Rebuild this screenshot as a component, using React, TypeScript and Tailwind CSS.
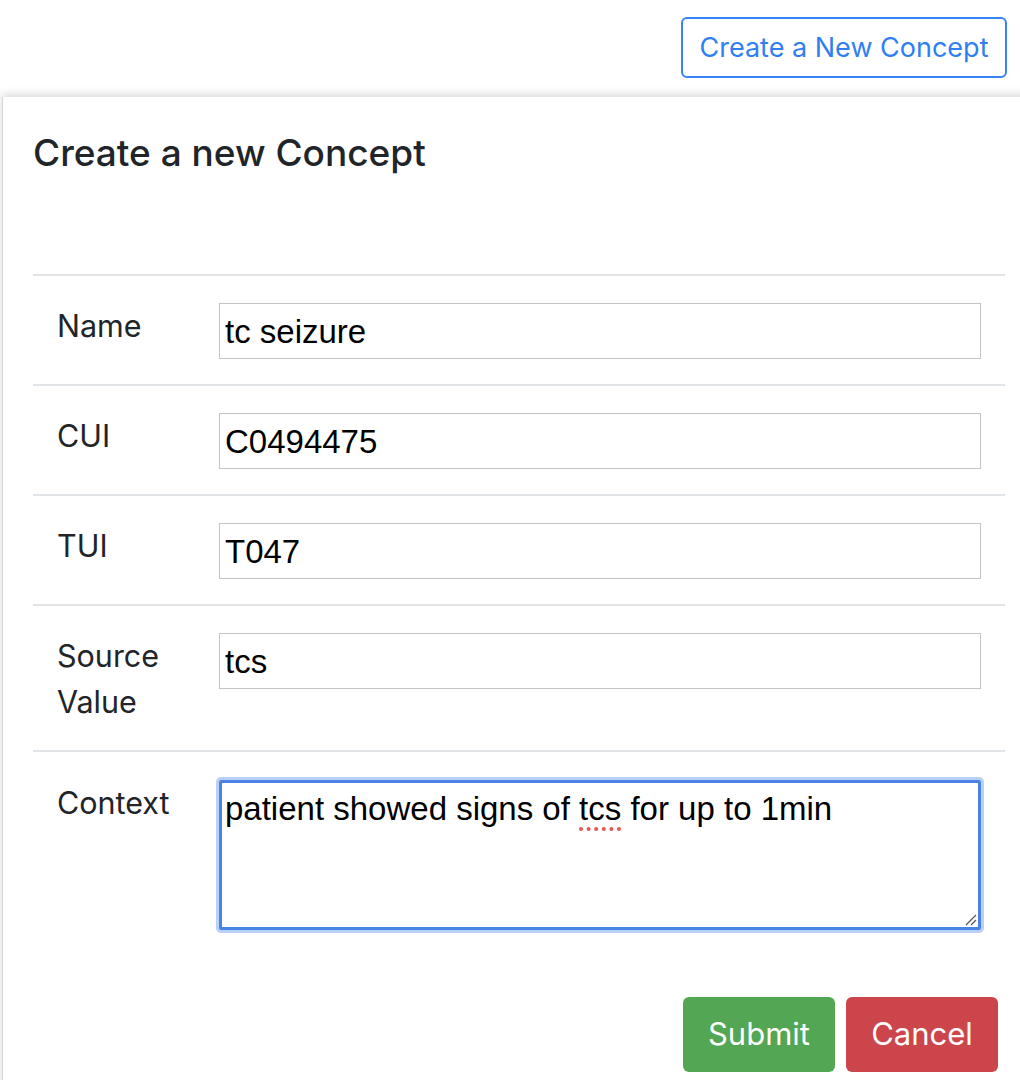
import React from "react";

interface FieldRow {
  label: string[];
  value: string;
}

const rows: FieldRow[] = [
  { label: ["Name"], value: "tc seizure" },
  { label: ["CUI"], value: "C0494475" },
  { label: ["TUI"], value: "T047" },
  { label: ["Source", "Value"], value: "tcs" },
];

const uiFont = { fontFamily: "Inter, 'Liberation Sans', sans-serif" };
const inputFont = { fontFamily: "'Liberation Sans', Arial, sans-serif" };

function Label({ lines }: { lines: string[] }) {
  return (
    <div className="pl-6 text-[30.5px] leading-[46px] text-[#212529]" style={uiFont}>
      {lines.map((line) => (
        <div key={line}>{line}</div>
      ))}
    </div>
  );
}

export default function App() {
  return (
    <div className="h-[1080px] w-full overflow-hidden bg-white">
      <div className="flex justify-end pt-[17px] pr-[13px]">
        <button
          type="button"
          className="h-[61px] w-[326px] rounded-[6px] border-2 border-[#3584f5] pt-[2px] text-[27px] text-[#2f7ff3]"
          style={uiFont}
        >
          Create a New Concept
        </button>
      </div>

      <div className="ml-[2px] mt-[19px] w-[1034px] border-l border-[#d6d6d6] bg-white pt-[32px] pr-[31px] pl-[30px] shadow-[0_-3px_8px_rgba(0,0,0,0.14)]">
        <h3 className="text-[37px] font-medium leading-[48px] text-[#212529]" style={uiFont}>
          Create a new Concept
        </h3>

        <div className="mt-[97px]">
          {rows.map((row) => (
            <div
              key={row.value}
              className="grid grid-cols-[186px_1fr] border-t-2 border-[#e1e4e7] pt-[27px] pb-[25px]"
            >
              <Label lines={row.label} />
              <div className="pr-6">
                <div
                  className="flex h-[56px] items-center border border-[#c4c4c4] pt-[2px] pl-[5px] text-[33px] text-black"
                  style={inputFont}
                >
                  {row.value}
                </div>
              </div>
            </div>
          ))}

          <div className="grid grid-cols-[186px_1fr] border-t-2 border-[#e1e4e7] pt-[28px] pb-[25px]">
            <Label lines={["Context"]} />
            <div className="pr-6">
              <div
                className="relative h-[150px] rounded-[2px] border-[3px] border-[#4a82e6] pl-[3px] pt-[6px] text-[33px] leading-[40px] text-black shadow-[0_0_0_3px_#b9d0f7]"
                style={inputFont}
              >
                patient showed signs of{" "}
                <span className="underline decoration-[#e8574f] decoration-dotted decoration-[4px] underline-offset-[7px]">
                  tcs
                </span>{" "}
                for up to 1min
                <svg
                  className="absolute right-[1px] bottom-[1px]"
                  width="14"
                  height="14"
                  viewBox="0 0 14 14"
                >
                  <path d="M13 3 L3 13 M13 8 L8 13" stroke="#555" strokeWidth="1.2" />
                </svg>
              </div>
            </div>
          </div>
        </div>

        <div className="mt-[42px] flex justify-end gap-[11px] pr-[7px] pb-[20px]">
          <button
            type="button"
            className="h-[75px] w-[152px] rounded-[6px] bg-[#53a653] text-[31px] text-white"
            style={uiFont}
          >
            Submit
          </button>
          <button
            type="button"
            className="h-[75px] w-[152px] rounded-[6px] bg-[#cb454b] text-[31px] text-white"
            style={uiFont}
          >
            Cancel
          </button>
        </div>
      </div>
    </div>
  );
}
